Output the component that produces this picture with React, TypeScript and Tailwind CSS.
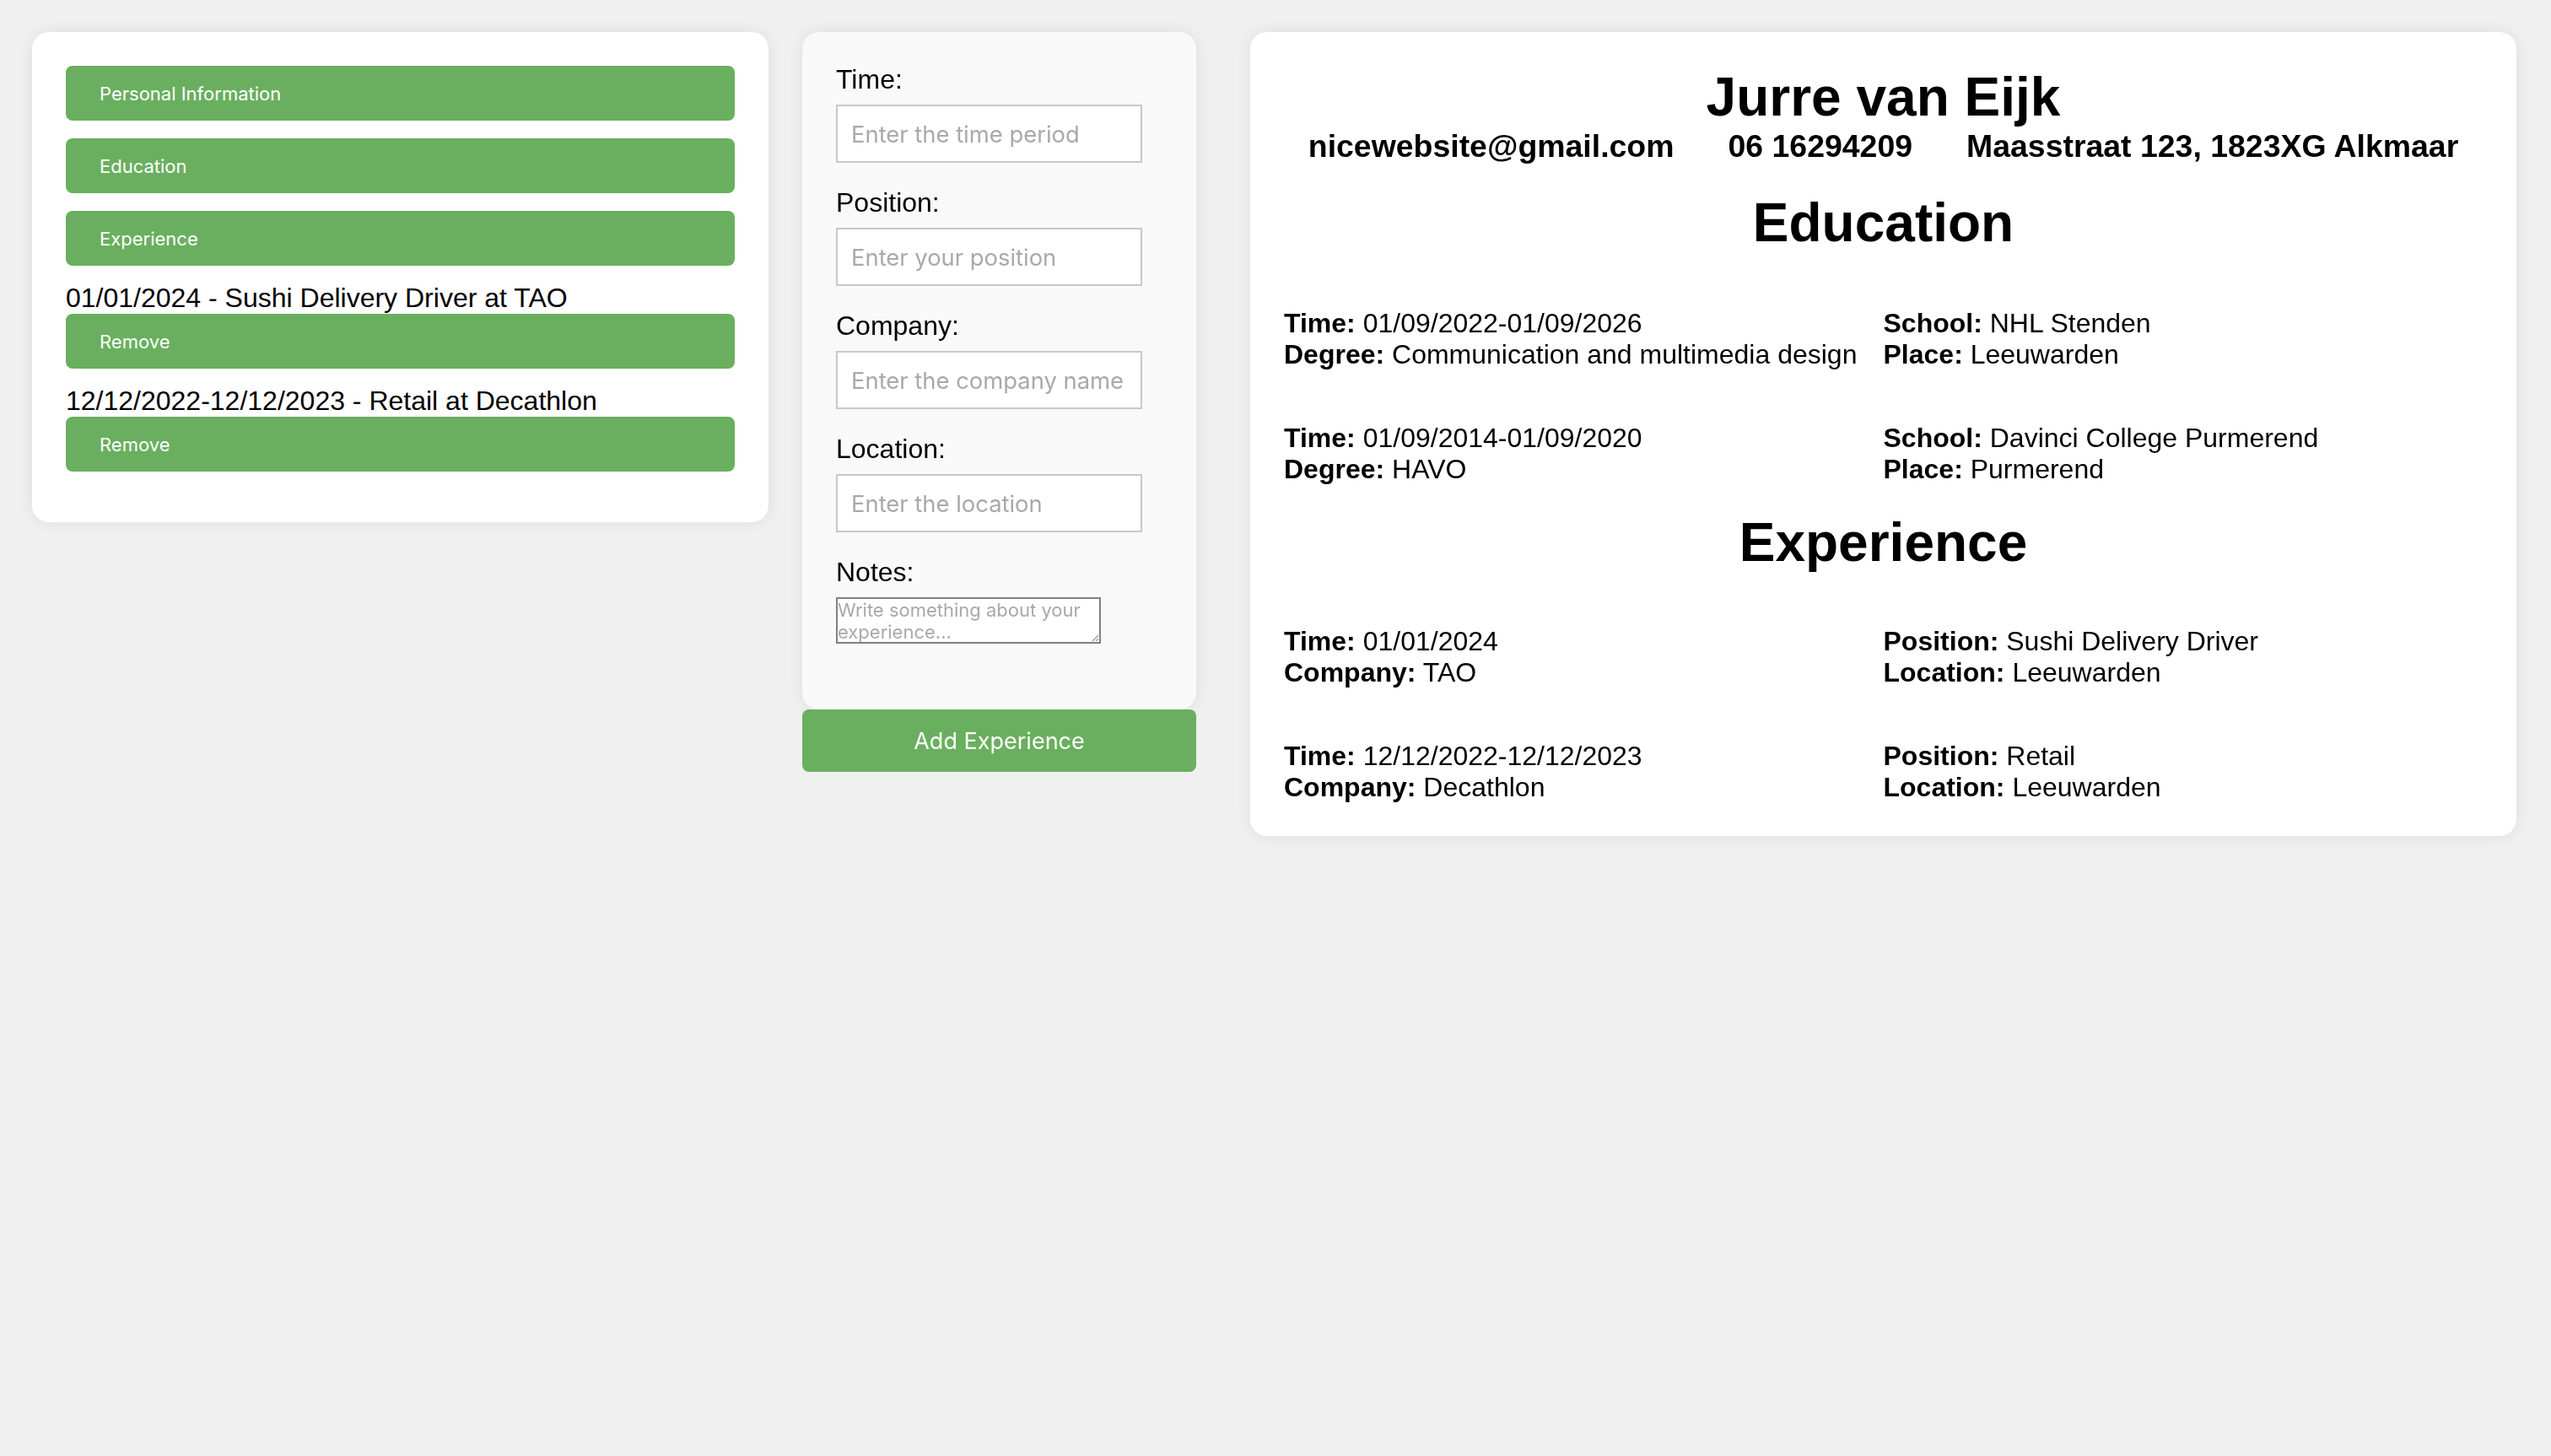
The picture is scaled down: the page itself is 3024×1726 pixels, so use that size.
import React from "react";

const navBtn =
  "block w-full h-[65px] rounded-[8px] bg-[#6aaf5f] text-white text-left pl-[40px] pt-[2px] font-['Inter',sans-serif] text-[22px] font-normal";

function Field({ label, value }: { label: string; value: string }) {
  return (
    <div className="leading-[37px]">
      <span className="font-bold">{label}</span> {value}
    </div>
  );
}

function Block({
  a,
  b,
  first,
}: {
  a: [string, string][];
  b: [string, string][];
  first?: boolean;
}) {
  return (
    <div className={first ? "grid grid-cols-2 mt-[64px]" : "grid grid-cols-2 mt-[62px]"}>
      <div>
        {a.map(([l, v]) => (
          <Field key={l} label={l} value={v} />
        ))}
      </div>
      <div>
        {b.map(([l, v]) => (
          <Field key={l} label={l} value={v} />
        ))}
      </div>
    </div>
  );
}

function FormField({ label, placeholder }: { label: string; placeholder: string }) {
  return (
    <div className="mb-[29px]">
      <label className="block text-[32px] leading-[37px] mb-[11px]">{label}</label>
      <input
        placeholder={placeholder}
        className="block w-[363px] h-[69px] border-2 border-[#c8c8c8] bg-white pl-[16px] pt-[1px] font-['Inter',sans-serif] text-[27.4px] placeholder:text-[#a9a9a9] outline-none"
      />
    </div>
  );
}

export default function App() {
  return (
    <div className="min-h-screen bg-[#f0f0f0] flex items-start pt-[38px] pl-[38px] pr-[41px] font-['Liberation_Sans',Arial,sans-serif] text-black">
      {/* Left panel */}
      <div className="w-[873px] shrink-0 bg-white rounded-[20px] shadow-[0_0_20px_rgba(0,0,0,0.08)] px-[40px] pt-[40px] pb-[60px]">
        <button className={navBtn + " mb-[21px]"}>Personal Information</button>
        <button className={navBtn + " mb-[21px]"}>Education</button>
        <button className={navBtn + " mb-[20px]"}>Experience</button>
        <div className="text-[32px] leading-[36px]">01/01/2024 - Sushi Delivery Driver at TAO</div>
        <button className={navBtn + " mt-[1px] mb-[20px]"}>Remove</button>
        <div className="text-[32px] leading-[36px]">12/12/2022-12/12/2023 - Retail at Decathlon</div>
        <button className={navBtn + " mt-[1px]"}>Remove</button>
      </div>

      {/* Form column */}
      <div className="ml-[40px] w-[467px] shrink-0">
        <div className="bg-[#f9f9f9] rounded-[20px] shadow-[0_0_20px_rgba(0,0,0,0.08)] px-[40px] pt-[38px] pb-[78px]">
          <FormField label="Time:" placeholder="Enter the time period" />
          <FormField label="Position:" placeholder="Enter your position" />
          <FormField label="Company:" placeholder="Enter the company name" />
          <FormField label="Location:" placeholder="Enter the location" />
          <div>
            <label className="block text-[32px] leading-[37px] mb-[11px]">Notes:</label>
            <textarea
              placeholder="Write something about your experience..."
              className="block w-[314px] h-[55px] border-2 border-[#808080] bg-white p-0 font-['Inter',sans-serif] text-[22px] leading-[26px] placeholder:text-[#a9a9a9] outline-none"
            />
          </div>
        </div>
        <button className="block w-full h-[74px] rounded-[8px] bg-[#6aaf5f] text-white pt-[2px] font-['Inter',sans-serif] text-[27px]">
          Add Experience
        </button>
      </div>

      {/* CV preview */}
      <div className="ml-[64px] flex-1 bg-white rounded-[20px] shadow-[0_0_20px_rgba(0,0,0,0.08)] px-[40px] pt-[40px] pb-[39px]">
        <h1 className="text-center font-bold text-[64px] leading-[74px]">Jurre van Eijk</h1>
        <div className="flex justify-center gap-[64px] font-bold text-[37.44px] leading-[43px]">
          <span>nicewebsite@gmail.com</span>
          <span>06 16294209</span>
          <span>Maasstraat 123, 1823XG Alkmaar</span>
        </div>
        <h2 className="mt-[32px] text-center font-bold text-[64px] leading-[74px]">Education</h2>
        <div className="text-[32px]">
          <Block
            first
            a={[
              ["Time:", "01/09/2022-01/09/2026"],
              ["Degree:", "Communication and multimedia design"],
            ]}
            b={[
              ["School:", "NHL Stenden"],
              ["Place:", "Leeuwarden"],
            ]}
          />
          <Block
            a={[
              ["Time:", "01/09/2014-01/09/2020"],
              ["Degree:", "HAVO"],
            ]}
            b={[
              ["School:", "Davinci College Purmerend"],
              ["Place:", "Purmerend"],
            ]}
          />
        </div>
        <h2 className="mt-[31px] text-center font-bold text-[64px] leading-[74px]">Experience</h2>
        <div className="text-[32px]">
          <Block
            a={[
              ["Time:", "01/01/2024"],
              ["Company:", "TAO"],
            ]}
            b={[
              ["Position:", "Sushi Delivery Driver"],
              ["Location:", "Leeuwarden"],
            ]}
          />
          <Block
            a={[
              ["Time:", "12/12/2022-12/12/2023"],
              ["Company:", "Decathlon"],
            ]}
            b={[
              ["Position:", "Retail"],
              ["Location:", "Leeuwarden"],
            ]}
          />
        </div>
      </div>
    </div>
  );
}
